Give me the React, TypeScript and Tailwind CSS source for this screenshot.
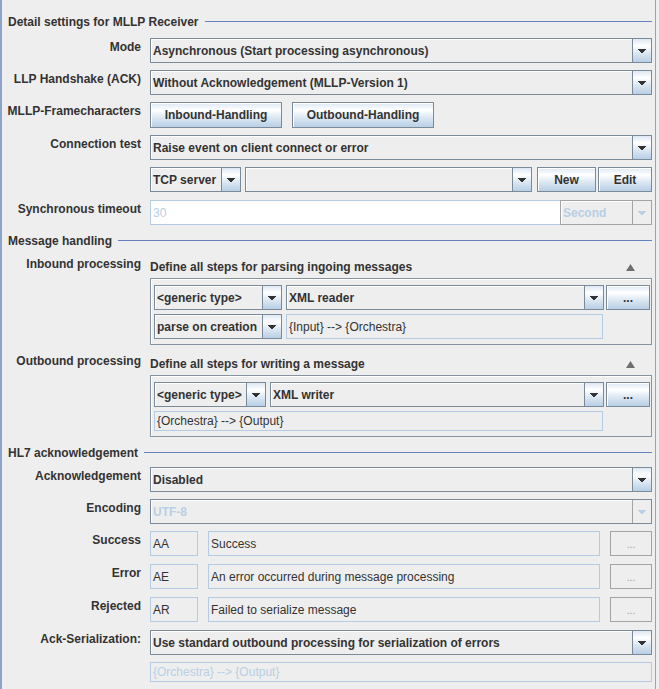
import React from 'react';

// Swing "Ocean" look: flat #eee panels, gray-blue borders, light blue gradients
const btnGradient =
  'bg-[linear-gradient(180deg,#dde8f3_0%,#ffffff_30%,#dde8f3_60%,#b8cfe5_100%)]';

function DownArrow({ disabled = false }: { disabled?: boolean }) {
  return (
    <svg width="8" height="4" viewBox="0 0 8 4" shapeRendering="crispEdges" fill={disabled ? '#b8cfe5' : '#333333'}>
      <path d="M0 0h8v1H0zM1 1h6v1H1zM2 2h4v1H2zM3 3h2v1H3z" />
    </svg>
  );
}

function UpArrow() {
  return (
    <svg width="9" height="7" viewBox="0 0 9 7" className="mr-[17px]">
      <polygon points="4.5,0 9,7 0,7" fill="#6e6e6e" />
    </svg>
  );
}

function Combo({
  text,
  className = '',
  disabled = false,
  grayBorder = false,
}: {
  text: string;
  className?: string;
  disabled?: boolean;
  grayBorder?: boolean;
}) {
  return (
    <div
      className={`flex h-[25px] border bg-[#eeeeee] ${grayBorder ? 'border-[#a3a3a3]' : 'border-[#7a8a99]'} ${className}`}
    >
      <div
        className={`flex min-w-0 flex-1 items-center overflow-hidden whitespace-nowrap pl-[2px] font-bold shadow-[inset_1px_1px_0_#ffffff] ${disabled ? 'text-[#b8cfe5]' : 'text-[#333333]'}`}
      >
        {text}
      </div>
      <div
        className={`flex w-[19px] shrink-0 items-center justify-center border-l ${disabled ? 'border-[#a3a3a3] bg-[#eeeeee]' : `border-[#7a8a99] ${btnGradient}`}`}
      >
        <DownArrow disabled={disabled} />
      </div>
    </div>
  );
}

function Button({ children, className = '' }: { children: React.ReactNode; className?: string }) {
  return (
    <div
      className={`flex items-center justify-center border border-[#7a8a99] font-bold text-[#333333] shadow-[inset_1px_1px_0_#ffffff] ${btnGradient} ${className}`}
    >
      {children}
    </div>
  );
}

function DotsOff() {
  return (
    <div className="flex h-[25px] w-[42px] shrink-0 items-center justify-center border border-[#a3a3a3] pt-[2px] text-[10px] text-[#9a9a9a]">
      ...
    </div>
  );
}

function Field({
  children,
  className = '',
  disabled = false,
  white = false,
}: {
  children?: React.ReactNode;
  className?: string;
  disabled?: boolean;
  white?: boolean;
}) {
  return (
    <div
      className={`flex items-center overflow-hidden whitespace-nowrap border border-[#b4cbe3] pl-[2px] ${white ? 'bg-white' : 'bg-[#eeeeee]'} ${disabled ? 'text-[#b8cfe5]' : 'text-[#333333]'} ${className}`}
    >
      {children}
    </div>
  );
}

function Title({ text, className = '' }: { text: string; className?: string }) {
  return (
    <div className={`flex items-start ${className}`}>
      <span className="font-bold text-[#333333]">{text}</span>
      <div className="ml-[6px] mt-[6px] h-px flex-1 bg-[#6382bf]" />
    </div>
  );
}

function Row({ label, className = '', children }: { label: string; className?: string; children: React.ReactNode }) {
  return (
    <div className={`flex gap-[9px] ${className}`}>
      <div className="flex w-[133px] shrink-0 justify-end whitespace-nowrap pt-[2px] font-bold text-[#333333]">{label}</div>
      <div className="flex w-[502px] shrink-0">{children}</div>
    </div>
  );
}

function App() {
  return (
    <div className="flex h-[689px] w-[659px] overflow-hidden bg-[#eeeeee] font-['Liberation_Sans',Arial,sans-serif] text-[12px] leading-[14px]">
      <div className="w-[2px] shrink-0 bg-[#8ea4c6]" />

      <div className="flex w-[653px] shrink-0 flex-col pl-[6px] pr-[3px]">
        {/* MLLP receiver settings */}
        <Title text="Detail settings for MLLP Receiver" className="mt-[15px]" />

        <Row label="Mode" className="mt-[9px]">
          <Combo text="Asynchronous (Start processing asynchronous)" className="w-full" />
        </Row>
        <Row label="LLP Handshake (ACK)" className="mt-[7px]">
          <Combo text="Without Acknowledgement (MLLP-Version 1)" className="w-full" />
        </Row>
        <Row label="MLLP-Framecharacters" className="mt-[7px]">
          <Button className="h-[26px] w-[132px]">Inbound-Handling</Button>
          <Button className="ml-[10px] h-[26px] w-[142px]">Outbound-Handling</Button>
        </Row>
        <Row label="Connection test" className="mt-[7px]">
          <Combo text="Raise event on client connect or error" className="w-full" />
        </Row>
        <Row label="" className="mt-[7px]">
          <Combo text="TCP server" className="w-[91px]" />
          <Combo text="" className="ml-[4px] w-[287px]" />
          <Button className="ml-[5px] h-[25px] w-[59px]">New</Button>
          <Button className="ml-[2px] h-[25px] w-[54px]">Edit</Button>
        </Row>
        <Row label="Synchronous timeout" className="mt-[8px]">
          <Field white disabled className="h-[25px] w-[410px] border-r-0">
            30
          </Field>
          <Combo text="Second" disabled grayBorder className="w-[92px]" />
        </Row>

        {/* Message handling */}
        <Title text="Message handling" className="mt-[9px]" />

        <div className="mt-[9px] flex gap-[9px]">
          <div className="w-[133px] shrink-0 whitespace-nowrap text-right font-bold text-[#333333]">Inbound processing</div>
          <div className="flex w-[502px] shrink-0 flex-col">
            <div className="mt-[3px] flex items-center justify-between">
              <span className="font-bold text-[#333333]">Define all steps for parsing ingoing messages</span>
              <UpArrow />
            </div>
            <div className="mt-[4px] flex flex-col gap-[4px] border border-[#8693a0] pb-[5px] pl-[3px] pr-[1px] pt-[6px] shadow-[inset_1px_1px_0_#ffffff]">
              <div className="flex">
                <Combo text="<generic type>" className="w-[128px]" />
                <Combo text="XML reader" className="ml-[4px] flex-1" />
                <Button className="ml-[2px] h-[25px] w-[44px]">...</Button>
              </div>
              <div className="flex">
                <Combo text="parse on creation" className="w-[128px]" />
                <Field className="ml-[4px] h-[25px] w-[317px]">{'{Input} --> {Orchestra}'}</Field>
              </div>
            </div>
          </div>
        </div>

        <div className="mt-[9px] flex gap-[9px]">
          <div className="w-[133px] shrink-0 whitespace-nowrap text-right font-bold text-[#333333]">Outbound processing</div>
          <div className="flex w-[502px] shrink-0 flex-col">
            <div className="mt-[3px] flex items-center justify-between">
              <span className="font-bold text-[#333333]">Define all steps for writing a message</span>
              <UpArrow />
            </div>
            <div className="mt-[4px] flex flex-col gap-[4px] border border-[#8693a0] pb-[5px] pl-[3px] pr-[1px] pt-[6px] shadow-[inset_1px_1px_0_#ffffff]">
              <div className="flex">
                <Combo text="<generic type>" className="w-[112px]" />
                <Combo text="XML writer" className="ml-[4px] flex-1" />
                <Button className="ml-[2px] h-[25px] w-[44px]">...</Button>
              </div>
              <Field className="h-[20px] w-[449px]">{'{Orchestra} --> {Output}'}</Field>
            </div>
          </div>
        </div>

        {/* HL7 acknowledgement */}
        <Title text="HL7 acknowledgement" className="mt-[9px]" />

        <Row label="Acknowledgement" className="mt-[7px]">
          <Combo text="Disabled" className="w-full" />
        </Row>
        <Row label="Encoding" className="mt-[7px]">
          <Combo text="UTF-8" disabled className="w-full" />
        </Row>
        <Row label="Success" className="mt-[7px]">
          <Field className="h-[25px] w-[48px]">AA</Field>
          <Field className="ml-[10px] h-[25px] w-[392px]">Success</Field>
          <div className="ml-[10px]">
            <DotsOff />
          </div>
        </Row>
        <Row label="Error" className="mt-[8px]">
          <Field className="h-[25px] w-[48px]">AE</Field>
          <Field className="ml-[10px] h-[25px] w-[392px]">An error occurred during message processing</Field>
          <div className="ml-[10px]">
            <DotsOff />
          </div>
        </Row>
        <Row label="Rejected" className="mt-[8px]">
          <Field className="h-[25px] w-[48px]">AR</Field>
          <Field className="ml-[10px] h-[25px] w-[392px]">Failed to serialize message</Field>
          <div className="ml-[10px]">
            <DotsOff />
          </div>
        </Row>
        <Row label="Ack-Serialization:" className="mt-[8px]">
          <Combo text="Use standard outbound processing for serialization of errors" className="w-full" />
        </Row>
        <Row label="" className="mt-[7px]">
          <Field disabled className="h-[20px] w-full">
            {'{Orchestra} --> {Output}'}
          </Field>
        </Row>
      </div>

      <div className="w-px shrink-0 bg-[#99a4b0]" />
      <div className="w-[3px] shrink-0" />
    </div>
  );
}

export default App;
